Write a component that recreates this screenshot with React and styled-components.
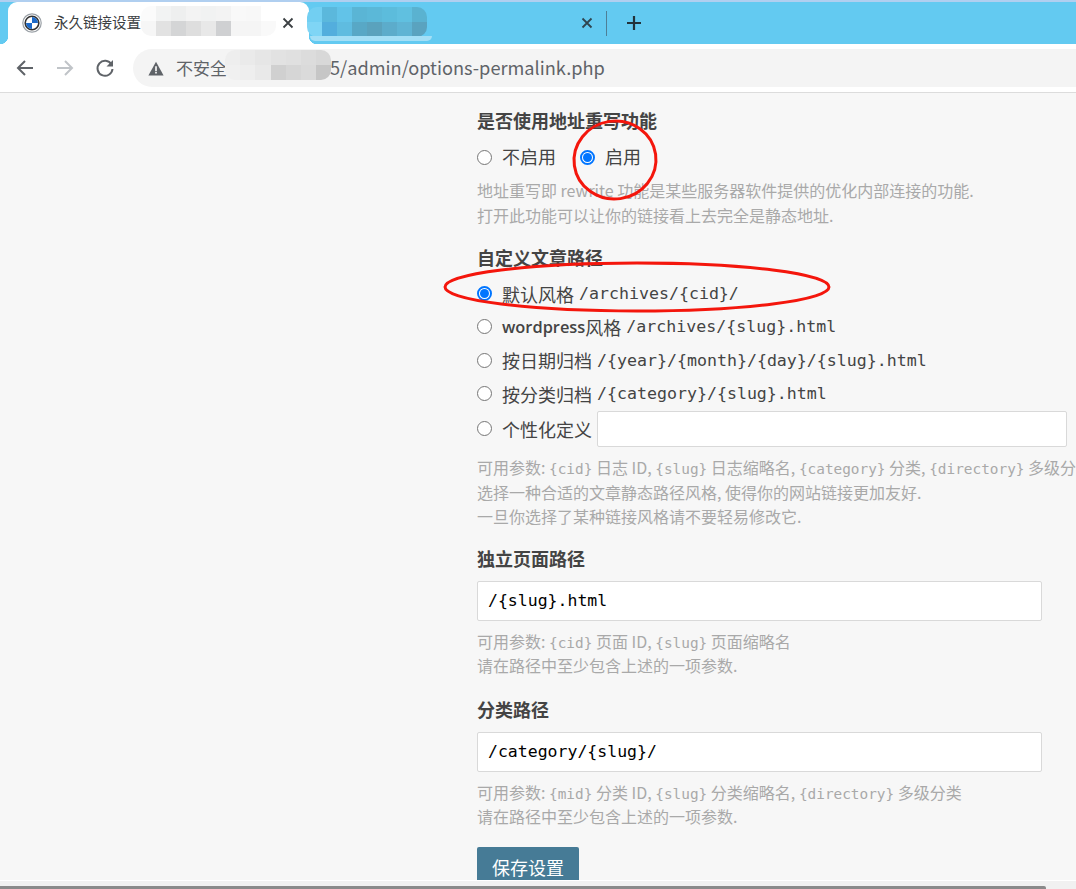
import React from 'react';
import styled, { createGlobalStyle } from 'styled-components';

const Global = createGlobalStyle`
  html, body {
    margin: 0;
    height: 889px;
    overflow: hidden;
    background: #f7f7f7;
  }
  * { box-sizing: border-box; }
`;

const SANS = `"Noto Sans CJK SC", "Open Sans", sans-serif`;
const MONO = `"DejaVu Sans Mono", "Noto Sans CJK SC", monospace`;

const Window = styled.div`
  position: relative;
  width: 1076px;
  height: 889px;
  display: flex;
  flex-direction: column;
  overflow: hidden;
  font-family: ${SANS};
`;

const TabStrip = styled.div`
  height: 44px;
  flex: none;
  display: flex;
  align-items: center;
  padding-left: 8px;
  background: #63caf1;
  border-top: 2px solid #b0cff0;
`;

const ActiveTab = styled.div`
  position: relative;
  width: 301px;
  height: 42px;
  flex: none;
  display: flex;
  align-items: center;
  padding: 0 15px 0 14px;
  gap: 12px;
  background: #fff;
  border-radius: 9px 9px 0 0;
  font-size: 14.5px;
  color: #3c4043;
  &::before, &::after {
    content: '';
    position: absolute;
    bottom: 0;
    width: 8px;
    height: 8px;
  }
  &::before {
    left: -8px;
    background: radial-gradient(circle at 0 0, transparent 8px, #fff 8.5px);
  }
  &::after {
    right: -8px;
    background: radial-gradient(circle at 100% 0, transparent 8px, #fff 8.5px);
  }
`;

const TabTitle = styled.span`
  flex: 1;
  padding-bottom: 3px;
  white-space: nowrap;
  overflow: hidden;
`;

const CloseMark = styled.svg`
  width: 12px;
  height: 12px;
  flex: none;
`;

const InactiveTab = styled.div`
  position: relative;
  width: 286px;
  height: 42px;
  flex: none;
  display: flex;
  align-items: center;
  justify-content: flex-end;
  padding-right: 2px;
  &::after {
    content: '';
    position: absolute;
    left: 1px;
    top: 34px;
    width: 122px;
    height: 5px;
    border-radius: 0 0 8px 8px;
    background: #a3dff6;
  }
`;

const Divider = styled.div`
  width: 1px;
  height: 25px;
  margin-left: 11px;
  flex: none;
  background: #4e7f96;
`;

const NewTab = styled.svg`
  width: 16px;
  height: 16px;
  margin-left: 19px;
  flex: none;
`;

const Toolbar = styled.div`
  height: 49px;
  flex: none;
  display: flex;
  align-items: center;
  padding: 0 0 0 14px;
  gap: 18px;
  background: #fff;
  border-bottom: 1px solid #dcdcdc;
`;

const NavIcon = styled.svg`
  width: 22px;
  height: 22px;
  flex: none;
`;

const Omnibox = styled.div`
  position: relative;
  flex: 1;
  height: 38px;
  margin-left: -1px;
  padding-left: 15px;
  display: flex;
  align-items: center;
  gap: 12px;
  background: #f4f4f4;
  border-radius: 19px 0 0 19px;
  font-size: 17px;
  color: #5f6368;
`;

const UrlText = styled.span`
  padding-bottom: 3px;
`;

const UrlPath = styled.span`
  margin-left: 103px;
  font-size: 18.2px;
`;

const Viewport = styled.div`
  position: relative;
  flex: 1;
  min-height: 0;
  overflow: hidden;
  padding: 14px 0 0 477px;
  background: #f7f7f7;
`;

const Column = styled.div`
  width: 565px;
  display: flex;
  flex-direction: column;
`;

const Section = styled.section`
  margin-bottom: ${({ $gap }) => $gap}px;
`;

const Heading = styled.h3`
  margin: 0 0 ${({ $after }) => $after || 10}px;
  font-size: 18px;
  line-height: 26px;
  font-weight: 700;
  color: #444;
`;

const Option = styled.label`
  display: flex;
  align-items: center;
  height: ${({ $h }) => $h || 33.3}px;
  font-size: 18px;
  color: #444;
  white-space: nowrap;
`;

const Radio = styled.span`
  width: 15px;
  height: 15px;
  flex: none;
  margin-right: 10px;
  border-radius: 50%;
  border: ${({ $on }) => ($on ? '2px solid #0075ff' : '1.5px solid #767676')};
  background: #fff;
  display: flex;
  align-items: center;
  justify-content: center;
  &::after {
    content: '';
    display: ${({ $on }) => ($on ? 'block' : 'none')};
    width: 9px;
    height: 9px;
    border-radius: 50%;
    background: #0075ff;
  }
`;

const InlineOptions = styled.div`
  display: flex;
  gap: 24px;
  height: 33px;
  margin-bottom: 6px;
  ${Radio} {
    margin-top: 3px;
  }
`;

const Code = styled.code`
  font-family: ${MONO};
  font-size: 16.6px;
  margin-left: 5px;
`;

const Strong = styled.span`
  font-family: "Open Sans", sans-serif;
  font-weight: 600;
  font-size: 16.4px;
`;

const CustomInput = styled.div`
  width: 470px;
  height: 36px;
  flex: none;
  margin-left: 5px;
  background: #fff;
  border: 1px solid #d9d9d9;
  border-radius: 2px;
`;

const TextInput = styled.div`
  width: 565px;
  height: 40px;
  padding-left: 10px;
  display: flex;
  align-items: center;
  background: #fff;
  border: 1px solid #d9d9d9;
  border-radius: 2px;
  font-family: ${MONO};
  font-size: 16.5px;
  color: #000;
`;

const Help = styled.p`
  margin: ${({ $top }) => $top || 0}px 0 0;
  font-size: 16px;
  line-height: 24.5px;
  color: #a9a9a9;
  white-space: nowrap;
  code {
    font-family: ${MONO};
    font-size: 14.4px;
    line-height: 1;
  }
`;

const SaveButton = styled.button`
  width: 102px;
  height: 40px;
  padding: 0;
  border: 0;
  border-radius: 2px;
  background: #467b96;
  color: #fff;
  font-family: ${SANS};
  font-size: 18px;
`;

const HScroll = styled.div`
  height: 9px;
  flex: none;
  display: flex;
  align-items: flex-end;
  background: #f1f1f1;
  border-top: 1px solid #fff;
`;

const HThumb = styled.div`
  width: 1046px;
  height: 3px;
  background: #8a8a8a;
  border-radius: 0 2px 0 0;
`;

/* blurred-out bits of the capture */
const Mosaic = styled.div`
  position: absolute;
  left: ${({ $x }) => $x}px;
  top: ${({ $y }) => $y}px;
  display: grid;
  grid-template-columns: repeat(${({ $cols }) => $cols}, ${({ $w }) => $w}px);
  grid-auto-rows: ${({ $h }) => $h}px;
  border-radius: 10px;
  overflow: hidden;
  filter: blur(0.6px);
`;

const Cell = styled.i`
  display: block;
  background: ${({ $c }) => $c};
`;

const Marks = styled.svg`
  position: absolute;
  left: 0;
  top: 0;
  pointer-events: none;
`;

const tabBlur = [
  '#fbfbfb', '#f2f3f3', '#eeefef', '#f3f3f3', '#f1f2f2', '#f3f3f3', '#f9f9f9', '#f8f8f8', '#ffffff',
  '#f6f6f6', '#e2e2e2', '#d4d5d6', '#dedede', '#e8e8e8', '#cfd0d2', '#f5f5f5', '#f5f5f5', '#f9f9f9',
];
const tab2Blur = [
  '#72cff2', '#5bb8dc', '#62c3e8', '#5ab5d5', '#5bb8d8', '#5cbcdc', '#60c0e0', '#5ab2d0',
  '#7fd5f5', '#53aedd', '#5fbce0', '#58a8c6', '#5aa2bd', '#5caccb', '#5fb4d4', '#5aa3bf',
];
const urlBlur = [
  '#eeeeee', '#eaeaea', '#e6e6e6', '#e2e2e2', '#e0e0e0', '#dcdcdc', '#d8d8d8',
  '#f0f0f0', '#eeeeee', '#e9e9e9', '#d0d0d0', '#d6d6d6', '#dadada', '#c6c6c6',
];

const Blur = ({ x, y, cols, w, h, colors }) => (
  <Mosaic $x={x} $y={y} $cols={cols} $w={w} $h={h}>
    {colors.map((c, i) => <Cell key={i} $c={c} />)}
  </Mosaic>
);

const App = () => (
  <Window>
    <Global />
    <TabStrip>
      <ActiveTab>
        <svg width="20" height="20" viewBox="0 0 20 20" style={{ flex: 'none' }}>
          <circle cx="10" cy="10" r="9.2" fill="#fff" stroke="#9aa0a6" strokeWidth="1.2" />
          <circle cx="10" cy="10" r="6.8" fill="#fff" stroke="#333" strokeWidth="1.6" />
          <path d="M10 10V4a6 6 0 0 1 6 6zM10 10v6a6 6 0 0 1-6-6z" fill="#1c69c8" />
        </svg>
        <TabTitle>永久链接设置</TabTitle>
        <CloseMark viewBox="0 0 12 12">
          <path d="M1.5 1.5l9 9M10.5 1.5l-9 9" stroke="#3c4043" strokeWidth="1.8" />
        </CloseMark>
        <Blur x={133} y={4} cols={9} w={15} h={15} colors={tabBlur} />
      </ActiveTab>
      <InactiveTab>
        <CloseMark viewBox="0 0 12 12">
          <path d="M1.5 1.5l9 9M10.5 1.5l-9 9" stroke="#2f4550" strokeWidth="1.8" />
        </CloseMark>
        <Blur x={-2} y={5} cols={8} w={15} h={15} colors={tab2Blur} />
      </InactiveTab>
      <Divider />
      <NewTab viewBox="0 0 16 16">
        <path d="M8 1v14M1 8h14" stroke="#22333b" strokeWidth="2.2" />
      </NewTab>
    </TabStrip>
    <Toolbar>
      <NavIcon viewBox="0 0 22 22">
        <path d="M19 11H4.5M11 4l-7 7 7 7" fill="none" stroke="#5f6368" strokeWidth="2" />
      </NavIcon>
      <NavIcon viewBox="0 0 22 22">
        <path d="M3 11h14.5M11 4l7 7-7 7" fill="none" stroke="#c0c4c8" strokeWidth="2" />
      </NavIcon>
      <NavIcon viewBox="0 0 22 22">
        <path d="M17.5 7.5A7.5 7.5 0 1 0 18.5 12" fill="none" stroke="#5f6368" strokeWidth="2" />
        <path d="M19 3v6.5h-6.5z" fill="#5f6368" />
      </NavIcon>
      <Omnibox>
        <svg width="16" height="15" viewBox="0 0 16 15" style={{ flex: 'none' }}>
          <path d="M8 .8L15.6 14.4H.4z" fill="#5f6368" />
          <path d="M7.2 5.2h1.6v5H7.2zM7.2 11h1.6v1.6H7.2z" fill="#fff" />
        </svg>
        <UrlText>不安全<UrlPath>5/admin/options-permalink.php</UrlPath></UrlText>
        <Blur x={92} y={1} cols={7} w={15.2} h={15} colors={urlBlur} />
      </Omnibox>
    </Toolbar>
    <Viewport>
      <Column>
        <Section $gap={17}>
          <Heading $after={6}>是否使用地址重写功能</Heading>
          <InlineOptions>
            <Option><Radio />不启用</Option>
            <Option><Radio $on />启用</Option>
          </InlineOptions>
          <Help>地址重写即 rewrite 功能是某些服务器软件提供的优化内部连接的功能.</Help>
          <Help>打开此功能可以让你的链接看上去完全是静态地址.</Help>
        </Section>
        <Section $gap={16}>
          <Heading $after={7}>自定义文章路径</Heading>
          <Option><Radio $on />默认风格<Code>/archives/{'{cid}'}/</Code></Option>
          <Option><Radio /><Strong>wordpress</Strong>风格<Code>/archives/{'{slug}'}.html</Code></Option>
          <Option><Radio />按日期归档<Code>/{'{year}'}/{'{month}'}/{'{day}'}/{'{slug}'}.html</Code></Option>
          <Option><Radio />按分类归档<Code>/{'{category}'}/{'{slug}'}.html</Code></Option>
          <Option $h={37}><Radio />个性化定义<CustomInput /></Option>
          <Help $top={8}>可用参数: <code>{'{cid}'}</code> 日志 ID, <code>{'{slug}'}</code> 日志缩略名, <code>{'{category}'}</code> 分类, <code>{'{directory}'}</code> 多级分类</Help>
          <Help>选择一种合适的文章静态路径风格, 使得你的网站链接更加友好.</Help>
          <Help>一旦你选择了某种链接风格请不要轻易修改它.</Help>
        </Section>
        <Section $gap={18}>
          <Heading>独立页面路径</Heading>
          <TextInput>/{'{slug}'}.html</TextInput>
          <Help $top={8}>可用参数: <code>{'{cid}'}</code> 页面 ID, <code>{'{slug}'}</code> 页面缩略名</Help>
          <Help>请在路径中至少包含上述的一项参数.</Help>
        </Section>
        <Section $gap={18}>
          <Heading>分类路径</Heading>
          <TextInput>/category/{'{slug}'}/</TextInput>
          <Help $top={8}>可用参数: <code>{'{mid}'}</code> 分类 ID, <code>{'{slug}'}</code> 分类缩略名, <code>{'{directory}'}</code> 多级分类</Help>
          <Help>请在路径中至少包含上述的一项参数.</Help>
        </Section>
        <div><SaveButton>保存设置</SaveButton></div>
      </Column>
      <Marks width="1076" height="800" viewBox="0 93 1076 800">
        <ellipse cx="615" cy="160" rx="41" ry="39" fill="none" stroke="#f4160c" strokeWidth="3" transform="rotate(-8 615 160)" />
        <ellipse cx="637" cy="287" rx="192" ry="24" fill="none" stroke="#f4160c" strokeWidth="3" />
      </Marks>
    </Viewport>
    <HScroll><HThumb /></HScroll>
  </Window>
);

export default App;
